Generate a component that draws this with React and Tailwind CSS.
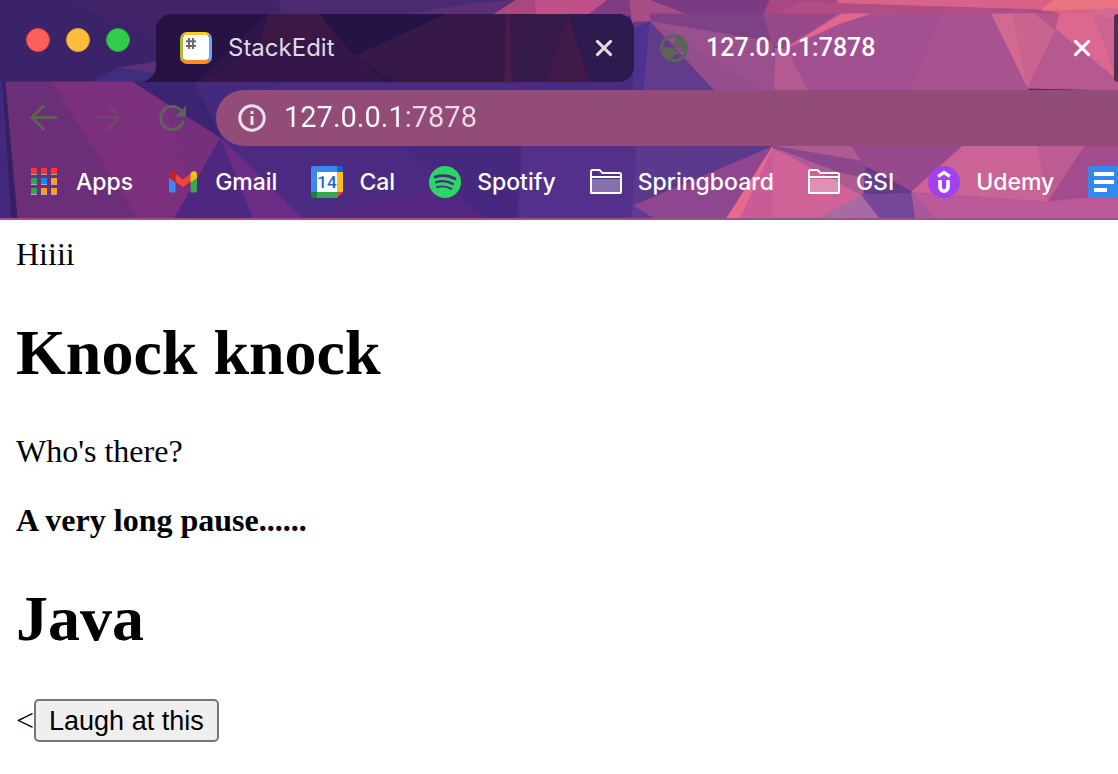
import React from "react";

const facets = [
  ["0,0 1118,0 1118,218 0,218", "#4b2b82"],
  // frame
  ["0,0 520,0 520,82 0,82", "#402467"],
  ["0,0 60,0 156,40 156,66 90,82 0,82", "#3b2369"],
  ["118,68 156,62 156,74", "#5c3078"],
  ["118,68 156,74 156,82 92,82", "#3f2d7e"],
  ["280,0 517,0 495,14 280,14", "#4a2a70"],
  ["410,14 470,4 517,0 495,14", "#5b3078"],
  ["495,14 517,0 608,0 590,14", "#c05088"],
  ["495,14 517,0 534,0 536,14", "#a9477f"],
  ["590,14 608,0 630,0 632,16", "#803c80"],
  ["630,0 652,0 690,14 650,22 634,40", "#a64d86"],
  ["652,0 770,0 764,14 688,14", "#7a3b80"],
  ["770,0 838,0 850,14 764,14", "#a94783"],
  ["838,0 1118,0 1118,14 838,14", "#d9628a"],
  ["800,2 850,4 1042,10 1060,14 780,14", "#b14d85"],
  ["1042,10 1054,0 1118,0 1118,8", "#e8757f"],
  ["1095,10 1118,8 1118,60 1112,60", "#d56a91"],
  // selected tab
  ["634,22 652,22 715,90 634,90", "#633b8b"],
  ["634,30 649,22 643,90 634,90", "#4d3390"],
  ["650,14 765,14 773,44 652,22", "#7d4186"],
  ["652,22 773,42 775,90 715,90", "#99508d"],
  ["652,22 715,90 760,90", "#944d8d"],
  ["764,14 850,14 790,48 773,46", "#98498a"],
  ["785,50 838,14 993,14 1028,90 807,90", "#a8538f"],
  ["785,50 838,20 940,14 910,90 807,90", "#a25091"],
  ["786,48 842,14 868,14 838,24", "#e2668e"],
  ["775,48 786,49 807,90 775,90", "#b35a92"],
  ["992,14 1036,14 1056,30 1028,88", "#d16991"],
  ["1013,14 1036,14 1056,30 1028,88", "#c9648f"],
  ["1036,14 1060,14 1056,30", "#b85689"],
  ["1060,14 1094,14 1118,82 1056,30", "#dc6790"],
  ["1094,14 1112,20 1118,82", "#cb6490"],
  ["1056,30 1118,81 1118,90 1028,88", "#b65990"],
  // toolbar
  ["0,82 5,82 18,218 0,218", "#43287e"],
  ["3,82 8,82 18,218 12,218", "#36205f"],
  ["6,82 52,82 138,218 18,218", "#6b2f79"],
  ["52,82 134,82 221,138 175,218 138,218", "#7c2f7d"],
  ["134,82 221,138 190,192 165,102", "#742f7d"],
  ["134,82 195,82 222,138", "#3b2572"],
  ["195,82 280,82 222,138", "#45297f"],
  ["221,138 175,218 255,218", "#4d2780"],
  ["222,140 302,218 253,218", "#6b2c86"],
  ["300,218 440,190 490,218", "#552783"],
  ["405,146 522,146 518,218 487,218", "#46297f"],
  ["522,146 637,146 632,218 518,218", "#53308b"],
  ["637,146 772,146 633,206", "#5b398c"],
  ["772,147 728,218 652,218 633,206", "#8f4691"],
  ["633,206 652,218 632,218", "#643a91"],
  ["772,148 870,195 890,218 735,218", "#cf6297"],
  ["772,148 772,218 735,218", "#c95c96"],
  ["772,148 739,218 727,218", "#e8698f"],
  ["772,146 852,146 868,167 862,195", "#b05a94"],
  ["772,146 866,162 866,178 840,172", "#8b478c"],
  ["852,146 963,146 912,192 866,166", "#98498e"],
  ["866,167 912,192 864,194", "#653b8b"],
  ["862,195 880,218 820,218", "#a76aa3"],
  ["862,195 912,193 916,218 880,218", "#75479a"],
  ["963,146 1085,146 1048,202 912,192", "#ca6497"],
  ["1038,146 1085,146 1048,202", "#bd5c93"],
  ["1085,146 1118,146 1118,195 1048,202", "#a44b8d"],
  ["912,193 1048,202 1118,195 1118,218 916,218", "#bb5999"],
  ["912,193 934,218 916,218", "#a95898"],
];

function ThemeArt() {
  return (
    <svg
      aria-hidden="true"
      className="absolute inset-0 -z-10 h-full w-full"
      viewBox="0 0 1118 218"
      preserveAspectRatio="xMinYMin slice"
    >
      {facets.map(([points, fill], i) => (
        <polygon key={i} points={points} fill={fill} stroke={fill} strokeWidth="1.2" strokeLinejoin="round" />
      ))}
    </svg>
  );
}

function CloseIcon() {
  return (
    <svg viewBox="0 0 20 20" className="h-5 w-5" fill="none" stroke="currentColor" strokeWidth="3" strokeLinecap="round" aria-hidden="true">
      <path d="M3.400 3.400 16.600 16.600M16.600 3.400 3.400 16.600" />
    </svg>
  );
}

function StackEditIcon() {
  return (
    <svg viewBox="0 0 32 32" className="h-8 w-8 shrink-0" aria-hidden="true">
      <defs>
        <clipPath id="se">
          <rect width="32" height="32" rx="7" />
        </clipPath>
      </defs>
      <g clipPath="url(#se)">
        <path d="M0 0H32L16 16Z" fill="#ffc926" />
        <path d="M32 0V32L16 16Z" fill="#5dabf5" />
        <path d="M32 32H0L16 16Z" fill="#ff8a1f" />
        <path d="M0 32V0L16 16Z" fill="#a5c02c" />
      </g>
      <rect x="3" y="3" width="26" height="25" rx="4" fill="#fff" />
      <path d="M9 6v11M13 6v11M6 9.200h10M6 14h10" stroke="#6b6b6b" strokeWidth="1.9" />
    </svg>
  );
}

function GlobeIcon() {
  return (
    <svg viewBox="0 0 28 28" className="h-7 w-7 shrink-0" aria-hidden="true">
      <path
        fill="#5c6459"
        fillRule="evenodd"
        d="M14 0a14 14 0 1 0 0 28a14 14 0 1 0 0-28ZM16 3C10.500 2.300 5 5.500 3.400 10.600L4 13.500H11.500C14 13.500 15.200 15 15.200 17.200H18.500V20.500H14.600C14.600 22.500 13 23.500 10.800 23.800V24.600C15.500 26 21.500 24 24 19L21.500 17.500 18.800 13.600H15L13 11.500V8.500H15.200L16 6Z"
      />
      <path fill="#5c6459" d="M3 13.500H11.500C14 13.500 15.200 15 15.200 17V20.500H11V24.500C6 23.500 3 19 3 13.500ZM16 2.500V6L13.500 8.500V11L16 13.500H19L22 17.500L25 18V10C23.500 6 20 3 16 2.500Z" />
    </svg>
  );
}

function FolderIcon() {
  return (
    <svg viewBox="0 0 32 32" className="h-8 w-8" fill="none" stroke="#fff" strokeWidth="2" strokeLinejoin="round" aria-hidden="true">
      <path d="M2 13H30V27H2Z" fill="#fff" fillOpacity=".3" stroke="none" />
      <path d="M1 27V5.500Q1 4 2.500 4H9.500L12.500 7H29.500Q31 7 31 8.500V26Q31 27 30 27Z" />
      <path d="M1 11H31" />
    </svg>
  );
}

function AppsIcon() {
  const colors = ["#fb3333", "#fb3333", "#fb3333", "#34a35a", "#0a8cf5", "#f9a31c", "#34a35a", "#f9a31c", "#f9a31c"];
  return (
    <svg viewBox="0 0 32 32" className="h-8 w-8" aria-hidden="true">
      {colors.map((c, i) => {
        const x = 3 + (i % 3) * 10;
        const y = 2 + Math.floor(i / 3) * 10;
        return (
          <g key={i}>
            <rect x={x} y={y} width="6" height="7" fill="#b79fbe" />
            <rect x={x} y={y} width="6" height="6" fill={c} />
          </g>
        );
      })}
    </svg>
  );
}

function GmailIcon() {
  return (
    <svg viewBox="0 0 32 32" className="h-8 w-8" aria-hidden="true">
      <path d="M2 11 8.500 16V26.500H4A2 2 0 0 1 2 24.500Z" fill="#3789f6" />
      <path d="M30 11 23.500 16V26.500H28A2 2 0 0 0 30 24.500Z" fill="#36a853" />
      <path d="M8.500 7.800 16 13.600 23.500 7.800V15.500L16 21.200 8.500 15.500Z" fill="#f04437" />
      <path d="M2 12V8.500C2 5 5.500 4 8.500 7V16.500Z" fill="#c5221f" />
      <path d="M30 12V8.500C30 5 26.500 4 23.500 7V16.500Z" fill="#fdbc1c" />
    </svg>
  );
}

function CalendarIcon() {
  return (
    <svg viewBox="0 0 32 32" className="h-8 w-8" aria-hidden="true">
      <path d="M2 0H26V6H6V26H0V2A2 2 0 0 1 2 0Z" fill="#3789f6" />
      <path d="M26 0H30A2 2 0 0 1 32 2V6H26Z" fill="#0b66cf" />
      <path d="M26 6H32V26H26Z" fill="#fdbc1c" />
      <path d="M26 26H32L26 32Z" fill="#ee4336" />
      <path d="M6 26H26V32H6Z" fill="#36a853" />
      <path d="M0 26H6V32H2A2 2 0 0 1 0 30Z" fill="#188038" />
      <path d="M6 6H26V26H6Z" fill="#fff" />
      <text x="16" y="22" textAnchor="middle" fontSize="17" fontWeight="500" fill="#1668cf" fontFamily="Roboto, sans-serif">
        14
      </text>
    </svg>
  );
}

function SpotifyIcon() {
  return (
    <svg viewBox="0 0 32 32" className="h-8 w-8" aria-hidden="true">
      <circle cx="16" cy="16" r="16" fill="#2bd566" />
      <g fill="none" stroke="#4b2b82" strokeLinecap="round">
        <path d="M6.300 10.800C13 8.800 20.500 9.600 26 12.800" strokeWidth="2.800" />
        <path d="M7.200 16.200C13 14.500 19.300 15.300 24 18" strokeWidth="2.300" />
        <path d="M7.900 21.100C13 19.800 18 20.400 22.300 22.800" strokeWidth="1.900" />
      </g>
    </svg>
  );
}

function UdemyIcon() {
  return (
    <svg viewBox="0 0 32 32" className="h-8 w-8" fill="none" stroke="#fff" aria-hidden="true">
      <circle cx="16" cy="16" r="16" fill="#a142ee" stroke="none" />
      <path d="M10.200 10.300 16 6.500 21.800 10.300" strokeWidth="3.200" />
      <path d="M12 14V20.800C12 26.600 20 26.600 20 20.800V14" strokeWidth="3.600" />
    </svg>
  );
}

function DocsIcon() {
  return (
    <svg viewBox="0 0 32 32" className="h-8 w-8" aria-hidden="true">
      <rect width="32" height="32" rx="3" fill="#3289f3" />
      <path d="M6 8H26M6 16H26M6 24H19" stroke="#fff" strokeWidth="4" />
    </svg>
  );
}

const bookmarks = [
  { label: "Apps", Icon: AppsIcon },
  { label: "Gmail", Icon: GmailIcon },
  { label: "Cal", Icon: CalendarIcon },
  { label: "Spotify", Icon: SpotifyIcon },
  { label: "Springboard", Icon: FolderIcon },
  { label: "GSI", Icon: FolderIcon },
  { label: "Udemy", Icon: UdemyIcon },
  { label: "", Icon: DocsIcon },
];

function TabStrip() {
  return (
    <div className="flex h-[82px] overflow-hidden">
      <div className="flex w-[140px] shrink-0 gap-4 pt-7 pl-[26px]">
        <button aria-label="Close window" className="h-6 w-6 rounded-full border border-[#e2443f] bg-[#ff5f5a]" />
        <button aria-label="Minimize window" className="h-6 w-6 rounded-full border border-[#dfa02f] bg-[#ffbd3e]" />
        <button aria-label="Zoom window" className="h-6 w-6 rounded-full border border-[#27ab38] bg-[#32cc4b]" />
      </div>
      <svg viewBox="0 0 16 16" className="h-4 w-4 shrink-0 self-end" aria-hidden="true">
        <path d="M16 0V16H0A16 16 0 0 0 16 0Z" fill="#261344" />
      </svg>
      <div className="relative isolate mt-[14px] flex w-[478px] shrink-0 items-center overflow-hidden rounded-t-2xl rounded-br-2xl bg-[#2c154a] pr-5 pl-6">
        <svg viewBox="0 0 478 68" preserveAspectRatio="none" className="absolute inset-0 -z-10 h-full w-full" aria-hidden="true">
          <polygon points="0,0 112,0 40,68 0,68" fill="#261344" />
          <polygon points="112,0 164,0 198,42 230,68 44,68 100,36" fill="#35164a" />
          <polygon points="112,0 164,0 180,24 105,30" fill="#3e1844" />
          <polygon points="164,0 290,0 198,42" fill="#241345" />
          <polygon points="290,0 350,0 350,68 240,68 198,42" fill="#371948" />
          <polygon points="350,0 354,0 356,68 348,68" fill="#4a1c4b" />
          <polygon points="354,0 412,0 390,68 356,68" fill="#351a4b" />
          <polygon points="412,0 434,68 390,68" fill="#401a49" />
          <polygon points="412,0 478,0 478,68 434,68" fill="#2d1a4e" />
        </svg>
        <StackEditIcon />
        <span className="ml-4 flex-1 text-2xl text-[#dedbe0]">StackEdit</span>
        <button aria-label="Close StackEdit" className="text-[#dedbe0]">
          <CloseIcon />
        </button>
      </div>
      <div className="mt-[14px] flex w-[478px] shrink-0 items-center rounded-t-2xl pr-5 pl-[26px]">
        <GlobeIcon />
        <span className="ml-[18px] flex-1 font-['Roboto',sans-serif] text-[25px] font-medium">127.0.0.1:7878</span>
        <button aria-label="Close 127.0.0.1:7878">
          <CloseIcon />
        </button>
      </div>
      <div className="mt-[14px] ml-0.5 flex-1 rounded-l-2xl bg-[#562b50]" />
    </div>
  );
}

function Toolbar() {
  return (
    <div className="flex h-[72px] items-center pl-7 text-[#5c6459]">
      <button aria-label="Back" className="mr-8">
        <svg viewBox="0 0 32 32" className="h-8 w-8" fill="none" stroke="currentColor" strokeWidth="3" strokeLinecap="round" aria-hidden="true">
          <path d="M28 15.500H4.500M15.500 4 4 15.500 15.500 27" />
        </svg>
      </button>
      <button aria-label="Forward" className="mr-8 opacity-40">
        <svg viewBox="0 0 32 32" className="h-8 w-8" fill="none" stroke="currentColor" strokeWidth="3" strokeLinecap="round" aria-hidden="true">
          <path d="M4 15.500H27.500M16.500 4 28 15.500 16.500 27" />
        </svg>
      </button>
      <button aria-label="Reload" className="mr-7">
        <svg viewBox="0 0 32 32" className="h-8 w-8" aria-hidden="true">
          <path d="M24.500 8A11.500 11.500 0 1 0 27 20" fill="none" stroke="currentColor" strokeWidth="3" strokeLinecap="round" />
          <path d="M30 3.500V14.500H19Z" fill="currentColor" />
        </svg>
      </button>
      <div className="flex h-14 flex-1 items-center gap-[18px] rounded-l-full bg-[#934b78] pl-[22px]">
        <svg viewBox="0 0 28 28" className="h-7 w-7 shrink-0 text-[#e8e1e8]" aria-hidden="true">
          <circle cx="14" cy="14" r="12.200" fill="none" stroke="currentColor" strokeWidth="3" />
          <path d="M14 12V21M14 7V10" stroke="currentColor" strokeWidth="3" />
        </svg>
        <input
          aria-label="Address"
          defaultValue="127.0.0.1:7878"
          className="min-w-0 flex-1 bg-[linear-gradient(90deg,#ffffff_120px,#ecdbe5_120px)] bg-clip-text font-['Roboto',sans-serif] text-[29px] text-transparent outline-none"
        />
      </div>
    </div>
  );
}

export default function App() {
  return (
    <div className="min-h-screen bg-white text-black">
      <header className="relative isolate overflow-hidden border-b-2 border-[#9b5480] font-['Inter','Liberation_Sans',sans-serif] text-white">
        <ThemeArt />
        <TabStrip />
        <Toolbar />
        <nav aria-label="Bookmarks" className="flex h-16 items-center gap-[34px] overflow-hidden pb-2 pl-7 text-[23px] font-medium">
          {bookmarks.map(({ label, Icon }, i) => (
            <a key={i} href="#" aria-label={label || "Docs"} className="flex shrink-0 items-center gap-4">
              <Icon />
              {label && <span>{label}</span>}
            </a>
          ))}
        </nav>
      </header>
      <main className="p-4 font-['Liberation_Serif',serif] text-[32px] leading-[37px]">
        <div>Hiiii</div>
        <h1 className="my-[43px] text-[64px] leading-[74px] font-bold">Knock knock</h1>
        <p className="my-8">Who's there?</p>
        <p className="my-8 font-bold">A very long pause......</p>
        <h1 className="my-[43px] text-[64px] leading-[74px] font-bold">Java</h1>
        <div className="flex items-center">
          <span>&lt;</span>
          <button className="h-[43px] rounded-[5px] border-2 border-[#767676] bg-[#efefef] px-[13px] font-['Liberation_Sans',sans-serif] text-[27px] leading-8">
            Laugh at this
          </button>
        </div>
      </main>
    </div>
  );
}
